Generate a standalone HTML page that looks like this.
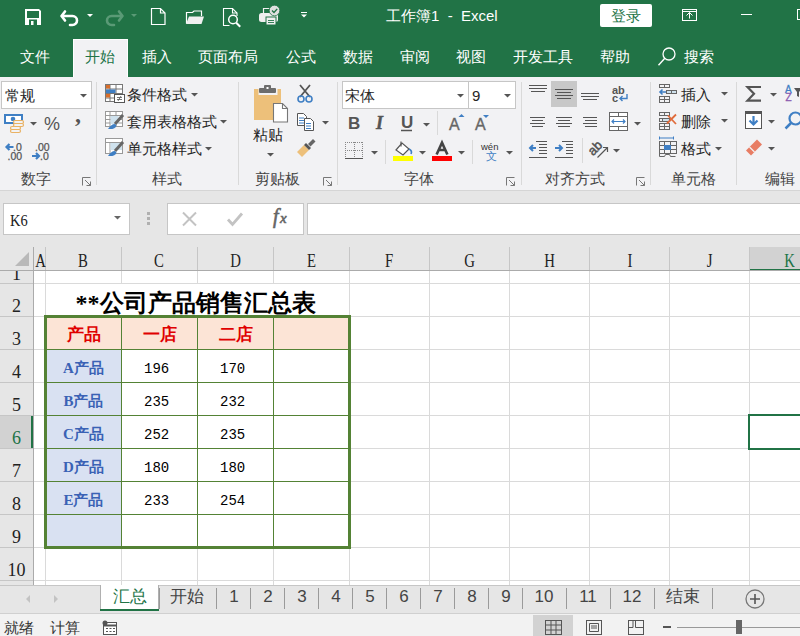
<!DOCTYPE html>
<html><head><meta charset="utf-8">
<style>
*{box-sizing:border-box}
html,body{margin:0;padding:0}
body{width:800px;height:636px;overflow:hidden;position:relative;background:#fff;font-family:"Liberation Sans",sans-serif;color:#262626}
.a{position:absolute}
.t{position:absolute;white-space:nowrap;line-height:1}
#title{left:0;top:0;width:800px;height:77px;background:#217346}
#ribbon{left:0;top:77px;width:800px;height:114px;background:#f2f2f4;border-bottom:1px solid #d5d5d5}
#fbar{left:0;top:191px;width:800px;height:56px;background:#e6e6e6}
.wt{color:#fff}
.sep{position:absolute;width:1px;background:#d9d9d9}
.glabel{position:absolute;top:171px;font-size:15px;color:#444;white-space:nowrap;line-height:1}
.rt{position:absolute;font-size:14px;color:#262626;white-space:nowrap;line-height:1}
.hl{position:absolute;height:1px;background:#dadada}
.vl{position:absolute;width:1px;background:#dadada}
.ch{position:absolute;top:252px;font-family:"Liberation Serif",serif;font-size:18px;color:#222;line-height:1;text-align:center}
.ch span,.rh span{display:inline-block;transform:scaleX(0.82)}
.rh{position:absolute;left:0;width:33px;font-family:"Liberation Serif",serif;font-size:18px;color:#222;line-height:1;text-align:center}
.cell{position:absolute;font-family:"Liberation Mono",monospace;font-size:14px;color:#000;line-height:1;white-space:nowrap}
.gl{position:absolute;background:#548235}
</style></head><body>
<div id="title" class="a"></div>
<div id="ribbon" class="a"></div>
<div id="fbar" class="a"></div>

<!-- title bar icons -->
<svg class="a" style="left:0;top:0" width="800" height="77">
 <!-- save -->
 <path d="M25 9h14l2 2v14h-16z" fill="#fff"/>
 <rect x="27" y="11" width="12" height="7" fill="#217346"/>
 <rect x="29" y="19.5" width="8" height="5.5" fill="#217346"/>
 <rect x="31" y="21" width="2.5" height="4" fill="#fff"/>
 <!-- undo -->
 <path d="M65 11.5 L61.5 16 L65 20.5 M62 16 H72.5 a4.5 4.5 0 0 1 0 9 H70" fill="none" stroke="#fff" stroke-width="2.6" stroke-linecap="round" stroke-linejoin="round"/>
 <path d="M87 14h6l-3 3z" fill="#fff"/>
 <!-- redo faded -->
 <path d="M119 11.5 L122.5 16 L119 20.5 M122 16 H111.5 a4.5 4.5 0 0 0 0 9 H114" fill="none" stroke="#5a9a76" stroke-width="2.6" stroke-linecap="round" stroke-linejoin="round"/>
 <path d="M131 14h6l-3 3z" fill="#5a9a76"/>
 <!-- new -->
 <path d="M151.5 8.5h9l4.5 4.5v11.5h-13.5z M160.5 8.5v4.5h4.5" fill="none" stroke="#fff" stroke-width="1.2"/>
 <!-- open -->
 <path d="M186.5 23.5V12.5h6l1.5-1.5h7.5v5" fill="none" stroke="#fff" stroke-width="1.2"/>
 <path d="M189 16.5h15l-2.5 7.5h-15.5z" fill="#f0f0f0"/>
 <!-- print preview -->
 <path d="M229.5 25.5h-6v-17h9l4.5 4.5v3" fill="none" stroke="#fff" stroke-width="1.1"/>
 <path d="M232.5 8.5v4.5h4.5" fill="none" stroke="#fff" stroke-width="1.1"/>
 <circle cx="233" cy="19.5" r="4.3" fill="none" stroke="#fff" stroke-width="1.5"/>
 <path d="M236.2 22.7l4 4" stroke="#fff" stroke-width="2"/>
 <!-- touch/print -->
 <rect x="259" y="13" width="19" height="9" rx="2.5" fill="#f0f0f0"/>
 <path d="M263.5 13V8.5h6" fill="none" stroke="#f0f0f0" stroke-width="1.2"/>
 <rect x="266" y="17" width="10" height="8" fill="#f0f0f0" stroke="#217346" stroke-width="1"/>
 <path d="M268 20.5h6M268 22.5h6" stroke="#217346" stroke-width="0.9"/>
 <circle cx="274.5" cy="10.5" r="5.3" fill="#e0e0e0" stroke="#217346" stroke-width="0.8"/>
 <path d="M272 10.5l2 2 3.2-3.6" fill="none" stroke="#217346" stroke-width="1.4"/>
 <!-- customize -->
 <path d="M301 12.5h6" stroke="#fff" stroke-width="1"/>
 <path d="M301 14.5h6l-3 3z" fill="#fff"/>
 <!-- ribbon display -->
 <rect x="682.5" y="9.5" width="14" height="11" fill="none" stroke="#fff" stroke-width="1"/>
 <path d="M682.5 11.5h14" stroke="#fff" stroke-width="1"/>
 <path d="M686.5 15.5l3-3 3 3M689.5 12.5v6" fill="none" stroke="#fff" stroke-width="1"/>
 <!-- minimize -->
 <path d="M741 14.5h11" stroke="#fff" stroke-width="1"/>
 <!-- maximize -->
 <rect x="797.5" y="9.5" width="10" height="10" fill="none" stroke="#fff" stroke-width="1"/>
 <!-- search icon -->
 <circle cx="669" cy="54" r="6" fill="none" stroke="#fff" stroke-width="1.3"/>
 <path d="M664.8 58.2l-6.3 7" stroke="#fff" stroke-width="1.4"/>
</svg>
<div class="t wt" style="left:386px;top:8px;font-size:15px">工作簿1&nbsp; -&nbsp; Excel</div>
<div class="a" style="left:600px;top:4px;width:52px;height:23px;background:#fff;border-radius:2px"></div>
<div class="t" style="left:611px;top:8px;font-size:15px;color:#217346">登录</div>
<!-- tabs -->
<div class="a" style="left:73px;top:39px;width:55px;height:38px;background:#f2f2f4;border-top:1px solid #fff;border-left:1px solid #fff;border-right:1px solid #fff"></div>
<div class="t wt" style="left:20px;top:49px;font-size:15px">文件</div>
<div class="t" style="left:85px;top:49px;font-size:15px;color:#217346">开始</div>
<div class="t wt" style="left:142px;top:49px;font-size:15px">插入</div>
<div class="t wt" style="left:198px;top:49px;font-size:15px">页面布局</div>
<div class="t wt" style="left:286px;top:49px;font-size:15px">公式</div>
<div class="t wt" style="left:343px;top:49px;font-size:15px">数据</div>
<div class="t wt" style="left:400px;top:49px;font-size:15px">审阅</div>
<div class="t wt" style="left:456px;top:49px;font-size:15px">视图</div>
<div class="t wt" style="left:513px;top:49px;font-size:15px">开发工具</div>
<div class="t wt" style="left:600px;top:49px;font-size:15px">帮助</div>
<div class="t wt" style="left:684px;top:49px;font-size:15px">搜索</div>



<!-- ===== FORMULA BAR ===== -->
<div class="a" style="left:3px;top:203px;width:127px;height:32px;background:#fff;border:1px solid #c6c6c6"></div>
<div class="t" style="left:10px;top:212px;font-family:'Liberation Serif',serif;font-size:17px;color:#222;transform:scaleX(0.85);transform-origin:0 0">K6</div>
<div class="a" style="left:167px;top:203px;width:137px;height:32px;background:#fff;border:1px solid #c6c6c6"></div>
<div class="a" style="left:307px;top:203px;width:500px;height:32px;background:#fff;border:1px solid #c6c6c6"></div>
<svg class="a" style="left:0;top:191px" width="800" height="56">
 <path d="M114 25h7l-3.5 3.5z" fill="#666"/>
 <rect x="147" y="21" width="3" height="3" fill="#b0b0b0"/>
 <rect x="147" y="26" width="3" height="3" fill="#b0b0b0"/>
 <rect x="147" y="31" width="3" height="3" fill="#b0b0b0"/>
 <path d="M183 21.5l13 13M196 21.5l-13 13" stroke="#c3c3c3" stroke-width="2"/>
 <path d="M228 28.5l4.5 5 9.5-11" fill="none" stroke="#c3c3c3" stroke-width="2.8"/>
 <text x="273" y="32" font-size="20" font-style="italic" fill="#666" stroke="#666" stroke-width="0.6" font-family="Liberation Serif">f</text><text x="280" y="32" font-size="15" font-style="italic" fill="#666" stroke="#666" stroke-width="0.6" font-family="Liberation Serif">x</text>
</svg>


<!-- ===== GRID ===== -->
<div class="a" style="left:0;top:247px;width:800px;height:24px;background:#e6e6e6"></div>
<div class="a" style="left:0;top:271px;width:33px;height:320px;background:#e6e6e6"></div>
<div class="a" style="left:750px;top:247px;width:50px;height:24px;background:#d2d2d2"></div>
<div class="a" style="left:750px;top:269px;width:50px;height:2px;background:#217346"></div>
<div class="a" style="left:0;top:416px;width:33px;height:32px;background:#d2d2d2"></div>
<div class="a" style="left:31px;top:416px;width:2px;height:32px;background:#217346"></div>
<div class="a" style="left:0;top:270px;width:800px;height:1px;background:#ababab"></div>
<div class="a" style="left:33px;top:247px;width:1px;height:340px;background:#ababab"></div>
<div class="a" style="left:45px;top:247px;width:1px;height:23px;background:#c6c6c6"></div>
<div class="vl" style="left:45px;top:271px;height:316px"></div>
<div class="a" style="left:121px;top:247px;width:1px;height:23px;background:#c6c6c6"></div>
<div class="vl" style="left:121px;top:271px;height:13px"></div><div class="vl" style="left:121px;top:316px;height:271px"></div>
<div class="a" style="left:197px;top:247px;width:1px;height:23px;background:#c6c6c6"></div>
<div class="vl" style="left:197px;top:271px;height:13px"></div><div class="vl" style="left:197px;top:316px;height:271px"></div>
<div class="a" style="left:273px;top:247px;width:1px;height:23px;background:#c6c6c6"></div>
<div class="vl" style="left:273px;top:271px;height:13px"></div><div class="vl" style="left:273px;top:316px;height:271px"></div>
<div class="a" style="left:349px;top:247px;width:1px;height:23px;background:#c6c6c6"></div>
<div class="vl" style="left:349px;top:271px;height:316px"></div>
<div class="a" style="left:429px;top:247px;width:1px;height:23px;background:#c6c6c6"></div>
<div class="vl" style="left:429px;top:271px;height:316px"></div>
<div class="a" style="left:509px;top:247px;width:1px;height:23px;background:#c6c6c6"></div>
<div class="vl" style="left:509px;top:271px;height:316px"></div>
<div class="a" style="left:589px;top:247px;width:1px;height:23px;background:#c6c6c6"></div>
<div class="vl" style="left:589px;top:271px;height:316px"></div>
<div class="a" style="left:669px;top:247px;width:1px;height:23px;background:#c6c6c6"></div>
<div class="vl" style="left:669px;top:271px;height:316px"></div>
<div class="a" style="left:749px;top:247px;width:1px;height:23px;background:#c6c6c6"></div>
<div class="vl" style="left:749px;top:271px;height:316px"></div>
<div class="a" style="left:0;top:283px;width:33px;height:1px;background:#c6c6c6"></div>
<div class="hl" style="left:34px;top:283px;width:766px"></div>
<div class="a" style="left:0;top:316px;width:33px;height:1px;background:#c6c6c6"></div>
<div class="hl" style="left:34px;top:316px;width:766px"></div>
<div class="a" style="left:0;top:349px;width:33px;height:1px;background:#c6c6c6"></div>
<div class="hl" style="left:34px;top:349px;width:766px"></div>
<div class="a" style="left:0;top:382px;width:33px;height:1px;background:#c6c6c6"></div>
<div class="hl" style="left:34px;top:382px;width:766px"></div>
<div class="a" style="left:0;top:415px;width:33px;height:1px;background:#c6c6c6"></div>
<div class="hl" style="left:34px;top:415px;width:766px"></div>
<div class="a" style="left:0;top:448px;width:33px;height:1px;background:#c6c6c6"></div>
<div class="hl" style="left:34px;top:448px;width:766px"></div>
<div class="a" style="left:0;top:481px;width:33px;height:1px;background:#c6c6c6"></div>
<div class="hl" style="left:34px;top:481px;width:766px"></div>
<div class="a" style="left:0;top:514px;width:33px;height:1px;background:#c6c6c6"></div>
<div class="hl" style="left:34px;top:514px;width:766px"></div>
<div class="a" style="left:0;top:547px;width:33px;height:1px;background:#c6c6c6"></div>
<div class="hl" style="left:34px;top:547px;width:766px"></div>
<div class="a" style="left:0;top:580px;width:33px;height:1px;background:#c6c6c6"></div>
<div class="hl" style="left:34px;top:580px;width:766px"></div>
<svg class="a" style="left:0;top:247px" width="33" height="23"><path d="M29 5v14H15z" fill="#b9b9b9"/></svg>
<div class="ch" style="left:34px;width:11px;color:#222"><span>A</span></div>
<div class="ch" style="left:46px;width:75px;color:#222"><span>B</span></div>
<div class="ch" style="left:122px;width:75px;color:#222"><span>C</span></div>
<div class="ch" style="left:198px;width:75px;color:#222"><span>D</span></div>
<div class="ch" style="left:274px;width:75px;color:#222"><span>E</span></div>
<div class="ch" style="left:350px;width:79px;color:#222"><span>F</span></div>
<div class="ch" style="left:430px;width:79px;color:#222"><span>G</span></div>
<div class="ch" style="left:510px;width:79px;color:#222"><span>H</span></div>
<div class="ch" style="left:590px;width:79px;color:#222"><span>I</span></div>
<div class="ch" style="left:670px;width:79px;color:#222"><span>J</span></div>
<div class="ch" style="left:750px;width:79px;color:#217346"><span>K</span></div>
<div class="a" style="left:0;top:271px;width:33px;height:12px;overflow:hidden"><div class="rh" style="top:-6px">1</div></div>
<div class="rh" style="top:297px;color:#222">2</div>
<div class="rh" style="top:330px;color:#222">3</div>
<div class="rh" style="top:363px;color:#222">4</div>
<div class="rh" style="top:396px;color:#222">5</div>
<div class="rh" style="top:429px;color:#217346">6</div>
<div class="rh" style="top:462px;color:#222">7</div>
<div class="rh" style="top:495px;color:#222">8</div>
<div class="rh" style="top:528px;color:#222">9</div>
<div class="rh" style="top:561px;color:#222">10</div>

<!-- ===== TABLE ===== -->
<div class="a" style="left:46px;top:317px;width:303px;height:32px;background:#fce4d6"></div>
<div class="a" style="left:46px;top:350px;width:75px;height:197px;background:#d9e1f2"></div>
<div class="t" style="left:44px;top:291px;width:303px;text-align:center;font-family:'Liberation Serif',serif;font-size:24px;font-weight:bold;color:#000">**公司产品销售汇总表</div>
<div class="t" style="left:46px;top:326px;width:75px;text-align:center;font-family:'Liberation Serif',serif;font-size:17px;font-weight:bold;color:#e00000">产品</div>
<div class="t" style="left:122px;top:326px;width:75px;text-align:center;font-family:'Liberation Serif',serif;font-size:17px;font-weight:bold;color:#e00000">一店</div>
<div class="t" style="left:198px;top:326px;width:75px;text-align:center;font-family:'Liberation Serif',serif;font-size:17px;font-weight:bold;color:#e00000">二店</div>
<div class="t" style="left:46px;top:361px;width:75px;text-align:center;font-family:'Liberation Serif',serif;font-size:15px;font-weight:bold;color:#3a62b5">A产品</div>
<div class="cell" style="left:144px;top:362px">196</div>
<div class="cell" style="left:220px;top:362px">170</div>
<div class="t" style="left:46px;top:394px;width:75px;text-align:center;font-family:'Liberation Serif',serif;font-size:15px;font-weight:bold;color:#3a62b5">B产品</div>
<div class="cell" style="left:144px;top:395px">235</div>
<div class="cell" style="left:220px;top:395px">232</div>
<div class="t" style="left:46px;top:427px;width:75px;text-align:center;font-family:'Liberation Serif',serif;font-size:15px;font-weight:bold;color:#3a62b5">C产品</div>
<div class="cell" style="left:144px;top:428px">252</div>
<div class="cell" style="left:220px;top:428px">235</div>
<div class="t" style="left:46px;top:460px;width:75px;text-align:center;font-family:'Liberation Serif',serif;font-size:15px;font-weight:bold;color:#3a62b5">D产品</div>
<div class="cell" style="left:144px;top:461px">180</div>
<div class="cell" style="left:220px;top:461px">180</div>
<div class="t" style="left:46px;top:493px;width:75px;text-align:center;font-family:'Liberation Serif',serif;font-size:15px;font-weight:bold;color:#3a62b5">E产品</div>
<div class="cell" style="left:144px;top:494px">233</div>
<div class="cell" style="left:220px;top:494px">254</div>
<div class="gl" style="left:121px;top:316px;width:1px;height:231px"></div>
<div class="gl" style="left:197px;top:316px;width:1px;height:231px"></div>
<div class="gl" style="left:273px;top:316px;width:1px;height:231px"></div>
<div class="gl" style="left:45px;top:349px;width:304px;height:1px"></div>
<div class="gl" style="left:45px;top:382px;width:304px;height:1px"></div>
<div class="gl" style="left:45px;top:415px;width:304px;height:1px"></div>
<div class="gl" style="left:45px;top:448px;width:304px;height:1px"></div>
<div class="gl" style="left:45px;top:481px;width:304px;height:1px"></div>
<div class="gl" style="left:45px;top:514px;width:304px;height:1px"></div>
<div class="gl" style="left:44px;top:315px;width:307px;height:3px"></div>
<div class="gl" style="left:44px;top:546px;width:307px;height:3px"></div>
<div class="gl" style="left:44px;top:315px;width:3px;height:234px"></div>
<div class="gl" style="left:348px;top:315px;width:3px;height:234px"></div>
<div class="a" style="left:748px;top:414px;width:60px;height:36px;border:2px solid #217346"></div>

<!-- ===== SHEET TABS ===== -->
<div class="a" style="left:0;top:585px;width:800px;height:28px;background:#e6e6e6;border-top:1px solid #c6c6c6"></div>
<div class="a" style="left:100px;top:585px;width:59px;height:25px;background:#fff;border-left:1px solid #b0b0b0;border-right:1px solid #b0b0b0"></div>
<div class="a" style="left:100px;top:609px;width:59px;height:2px;background:#217346"></div>
<div class="t" style="left:113px;top:588px;font-size:17px;color:#217346">汇总</div>
<div class="t" style="left:166px;top:588px;width:42px;text-align:center;font-size:17px;color:#444">开始</div>
<div class="t" style="left:222px;top:588px;width:24px;text-align:center;font-size:17px;color:#444">1</div>
<div class="t" style="left:256px;top:588px;width:24px;text-align:center;font-size:17px;color:#444">2</div>
<div class="t" style="left:290px;top:588px;width:24px;text-align:center;font-size:17px;color:#444">3</div>
<div class="t" style="left:324px;top:588px;width:24px;text-align:center;font-size:17px;color:#444">4</div>
<div class="t" style="left:358px;top:588px;width:24px;text-align:center;font-size:17px;color:#444">5</div>
<div class="t" style="left:392px;top:588px;width:24px;text-align:center;font-size:17px;color:#444">6</div>
<div class="t" style="left:426px;top:588px;width:24px;text-align:center;font-size:17px;color:#444">7</div>
<div class="t" style="left:460px;top:588px;width:24px;text-align:center;font-size:17px;color:#444">8</div>
<div class="t" style="left:494px;top:588px;width:24px;text-align:center;font-size:17px;color:#444">9</div>
<div class="t" style="left:528px;top:588px;width:32px;text-align:center;font-size:17px;color:#444">10</div>
<div class="t" style="left:572px;top:588px;width:32px;text-align:center;font-size:17px;color:#444">11</div>
<div class="t" style="left:616px;top:588px;width:32px;text-align:center;font-size:17px;color:#444">12</div>
<div class="t" style="left:661px;top:588px;width:44px;text-align:center;font-size:17px;color:#444">结束</div>
<div class="a" style="left:159px;top:588px;width:1px;height:21px;background:#9a9a9a"></div>
<div class="a" style="left:216px;top:588px;width:1px;height:21px;background:#9a9a9a"></div>
<div class="a" style="left:250px;top:588px;width:1px;height:21px;background:#9a9a9a"></div>
<div class="a" style="left:284px;top:588px;width:1px;height:21px;background:#9a9a9a"></div>
<div class="a" style="left:318px;top:588px;width:1px;height:21px;background:#9a9a9a"></div>
<div class="a" style="left:352px;top:588px;width:1px;height:21px;background:#9a9a9a"></div>
<div class="a" style="left:386px;top:588px;width:1px;height:21px;background:#9a9a9a"></div>
<div class="a" style="left:420px;top:588px;width:1px;height:21px;background:#9a9a9a"></div>
<div class="a" style="left:454px;top:588px;width:1px;height:21px;background:#9a9a9a"></div>
<div class="a" style="left:488px;top:588px;width:1px;height:21px;background:#9a9a9a"></div>
<div class="a" style="left:522px;top:588px;width:1px;height:21px;background:#9a9a9a"></div>
<div class="a" style="left:566px;top:588px;width:1px;height:21px;background:#9a9a9a"></div>
<div class="a" style="left:610px;top:588px;width:1px;height:21px;background:#9a9a9a"></div>
<div class="a" style="left:654px;top:588px;width:1px;height:21px;background:#9a9a9a"></div>
<div class="a" style="left:712px;top:588px;width:1px;height:21px;background:#9a9a9a"></div>
<svg class="a" style="left:0;top:585px" width="800" height="28"><path d="M30 10v8l-4-4z" fill="#c3c3c3"/><path d="M54 10v8l4-4z" fill="#c3c3c3"/><circle cx="755" cy="14" r="9" fill="none" stroke="#777" stroke-width="1.3"/><path d="M750 14h10M755 9v10" stroke="#555" stroke-width="1.6"/></svg>
<div class="a" style="left:0;top:613px;width:800px;height:23px;background:#f2f2f2;border-top:1px solid #d0d0d0"></div>
<div class="t" style="left:4px;top:620px;font-size:15px;color:#333">就绪</div>
<div class="t" style="left:50px;top:620px;font-size:15px;color:#333">计算</div>
<svg class="a" style="left:0;top:615px" width="800" height="21">
 <rect x="103.5" y="7.5" width="13" height="12" fill="#fff" stroke="#555"/>
 <path d="M103.5 10.5h13" stroke="#555" stroke-width="2"/>
 <path d="M106 13.5h2M109.5 13.5h2M113 13.5h2M106 16.5h2M109.5 16.5h2M113 16.5h2" stroke="#555"/>
 <circle cx="105" cy="8" r="2.5" fill="#555"/>
 <rect x="533" y="-2" width="40" height="23" fill="#d2d2d2"/>
 <g stroke="#555" fill="none" stroke-width="1">
  <rect x="545.5" y="5.5" width="16" height="14"/>
  <path d="M545.5 10h16M545.5 15h16M551 5.5v14M556 5.5v14"/>
  <rect x="586.5" y="5.5" width="15" height="14"/>
  <path d="M589.5 8.5h9v8h-9zM591 11h6M591 13h6"/>
  <rect x="628.5" y="5.5" width="15" height="14"/>
  <path d="M635.5 5.5v7h8M633 5.5v7h-4.5"/>
 </g>
 <path d="M663 12h8" stroke="#555" stroke-width="2"/>
 <path d="M677 12.5h123" stroke="#999" stroke-width="1"/>
 <rect x="736" y="5" width="6" height="14" fill="#666"/>
</svg>
<!-- ===== RIBBON ===== -->
<div class="sep" style="left:96px;top:82px;height:103px"></div>
<div class="sep" style="left:238px;top:82px;height:103px"></div>
<div class="sep" style="left:337px;top:82px;height:103px"></div>
<div class="sep" style="left:521px;top:82px;height:103px"></div>
<div class="sep" style="left:650px;top:82px;height:103px"></div>
<div class="sep" style="left:736px;top:82px;height:103px"></div>
<div class="glabel" style="left:21px">数字</div>
<div class="glabel" style="left:152px">样式</div>
<div class="glabel" style="left:255px">剪贴板</div>
<div class="glabel" style="left:404px">字体</div>
<div class="glabel" style="left:545px">对齐方式</div>
<div class="glabel" style="left:671px">单元格</div>
<div class="glabel" style="left:765px">编辑</div>
<!-- number -->
<div class="a" style="left:1px;top:81px;width:91px;height:28px;background:#fff;border:1px solid #c6c6c6"></div>
<div class="rt" style="left:5px;top:88px;font-size:15px">常规</div>
<div class="t" style="left:87px;top:112px;font-size:20px;color:#555"></div>
<div class="rt" style="left:44px;top:115px;font-size:18px;color:#555">%</div>
<div class="rt" style="left:75px;top:102px;font-family:'Liberation Serif',serif;font-size:24px;font-weight:bold;color:#555">,</div>
<!-- styles -->
<div class="rt" style="left:127px;top:87px;font-size:15px">条件格式</div>
<div class="rt" style="left:127px;top:114px;font-size:15px">套用表格格式</div>
<div class="rt" style="left:127px;top:141px;font-size:15px">单元格样式</div>
<!-- clipboard -->
<div class="rt" style="left:253px;top:127px;font-size:15px">粘贴</div>
<!-- font -->
<div class="a" style="left:342px;top:81px;width:127px;height:28px;background:#fff;border:1px solid #c6c6c6"></div>
<div class="a" style="left:468px;top:81px;width:48px;height:28px;background:#fff;border:1px solid #c6c6c6"></div>
<div class="rt" style="left:345px;top:88px;font-size:15px">宋体</div>
<div class="rt" style="left:472px;top:88px;font-size:15px">9</div>
<!-- cells -->
<div class="rt" style="left:681px;top:87px;font-size:15px">插入</div>
<div class="rt" style="left:681px;top:114px;font-size:15px">删除</div>
<div class="rt" style="left:681px;top:141px;font-size:15px">格式</div>
<svg class="a" style="left:0;top:0" width="800" height="191">
 <defs>
  <path id="dd" d="M0 0h7l-3.5 3.5z" fill="#555"/>
  <path id="launch" d="M0.5 8.5v-8h8M3 3l5.5 5.5M4.5 8.5h4v-4" fill="none" stroke="#777" stroke-width="1"/>
 </defs>
 <!-- launchers -->
 <use href="#launch" x="82" y="177"/>
 <use href="#launch" x="323" y="177"/>
 <use href="#launch" x="506" y="177"/>
 <use href="#launch" x="636" y="177"/>
 <!-- number dropdown -->
 <use href="#dd" x="80" y="94"/>
 <!-- currency -->
 <rect x="4" y="114" width="19" height="10" fill="#3f7fc4"/>
 <rect x="6" y="116" width="15" height="6" fill="#fff"/>
 <rect x="8" y="117.5" width="11" height="3" fill="#3f7fc4" opacity="0"/>
 <circle cx="13" cy="119" r="2.3" fill="#3f7fc4"/>
 <g fill="#f2f2f4" stroke="#e9b264" stroke-width="1.2">
  <rect x="10.5" y="129.5" width="10" height="3" rx="1.5"/>
  <rect x="10.5" y="126.5" width="10" height="3" rx="1.5"/>
  <rect x="13.5" y="123.5" width="10" height="3" rx="1.5"/>
  <rect x="13.5" y="120.5" width="10" height="3" rx="1.5"/>
 </g>
 <use href="#dd" x="30" y="122"/>
 <!-- decimals -->
 <g font-size="10.5" fill="#555" stroke="#555" stroke-width="0.25" font-family="Liberation Sans">
 <text x="13" y="150.5">.0</text>
 <text x="7.5" y="159.5">.00</text>
 <text x="35" y="150.5">.00</text>
 <text x="40" y="159.5">.0</text>
 </g>
 <path d="M6.5 147h7M9.5 144l-3 3 3 3" fill="none" stroke="#3f7fc4" stroke-width="2.2"/>
 <path d="M32 156h7M36 153l3 3-3 3" fill="none" stroke="#3f7fc4" stroke-width="2.2"/>
 <!-- styles icons -->
 <g stroke="#777" stroke-width="1" fill="#fff">
  <rect x="105.5" y="84.5" width="17" height="17"/>
  <path d="M105.5 89h17M105.5 93.5h17M105.5 98h17M110 84.5v17M116 84.5v17" fill="none"/>
 </g>
 <rect x="106" y="85" width="4" height="3.5" fill="#d86e2b"/>
 <rect x="106" y="89.5" width="9.5" height="3.5" fill="#3f7fc4"/>
 <rect x="106" y="94" width="4" height="3.5" fill="#d86e2b"/>
 <rect x="114.5" y="94.5" width="10" height="8" fill="#fff" stroke="#555"/>
 <path d="M117 97.5h5M117 99.5h5M121 96l-3 5" stroke="#555" stroke-width="0.8" fill="none"/>
 <g stroke="#999" stroke-width="1" fill="#fff">
  <rect x="105.5" y="111.5" width="17" height="15"/>
  <path d="M105.5 115.5h17M105.5 119.5h17M105.5 123h17M110 111.5v15M116 111.5v15" fill="none"/>
 </g>
 <rect x="110.5" y="116" width="8" height="8" fill="#cfe2ee"/>
 <path d="M123 115l-8 9" stroke="#666" stroke-width="3"/>
 <path d="M108 129c2-3 4-5 7-5l1.5 1.5c-1 3-4 4-8.5 3.5z" fill="#3f7fc4"/>
 <g stroke="#999" stroke-width="1" fill="#fff">
  <rect x="105.5" y="138.5" width="17" height="15"/>
  <path d="M105.5 142.5h17M110 142.5v11" fill="none"/>
 </g>
 <rect x="110.5" y="143" width="11.5" height="7" fill="#cfe2ee"/>
 <path d="M123 142l-8 9" stroke="#666" stroke-width="3"/>
 <path d="M108 156c2-3 4-5 7-5l1.5 1.5c-1 3-4 4-8.5 3.5z" fill="#3f7fc4"/>
 <use href="#dd" x="191" y="93"/>
 <use href="#dd" x="220" y="120"/>
 <use href="#dd" x="205" y="147"/>
 <!-- paste -->
 <rect x="254" y="89" width="27" height="31" fill="#edc07a"/>
 <rect x="258.5" y="87" width="19" height="8" fill="#f2f2f4"/>
 <rect x="259" y="88" width="17" height="5" rx="1" fill="#6d6d6d"/>
 <rect x="264" y="85" width="7" height="5" rx="1" fill="#6d6d6d"/>
 <rect x="266.5" y="87" width="2" height="2" fill="#fff"/>
 <path d="M273.5 103.5h9l5 5v13.5h-14z" fill="#fff" stroke="#777" stroke-width="1.1"/>
 <path d="M282.5 103.5v5h5" fill="none" stroke="#777" stroke-width="1.1"/>
 <use href="#dd" x="267" y="153"/>
 <!-- scissors -->
 <path d="M300 85l10 12M310 85l-10 12" stroke="#555" stroke-width="1.8"/>
 <circle cx="301" cy="99" r="3" fill="none" stroke="#3f7fc4" stroke-width="1.6"/>
 <circle cx="309" cy="99" r="3" fill="none" stroke="#3f7fc4" stroke-width="1.6"/>
 <!-- copy -->
 <path d="M297.5 113.5h6l3 3v9h-9z" fill="#fff" stroke="#555"/>
 <path d="M304.5 118.5h6l3 3v9h-9z" fill="#fff" stroke="#555"/>
 <path d="M299 118h5M299 120.5h5M299 123h5M306 123.5h5M306 126h5M306 128.5h5" stroke="#3f7fc4" stroke-width="1"/>
 <use href="#dd" x="322" y="121"/>
 <!-- painter -->
 <path d="M297 152l7-7 5 5-7 7z" fill="#edc07a"/>
 <path d="M304 145l2-2 5 5-2 2z" fill="#555"/>
 <path d="M308 144l5-5 2.5 2.5-5 5z" fill="#666"/>
 <!-- font dropdowns -->
 <use href="#dd" x="457" y="94"/>
 <use href="#dd" x="504" y="94"/>
 <!-- B I U -->
 <text x="348" y="129" font-size="17" font-weight="bold" fill="#555" font-family="Liberation Sans">B</text>
 <text x="376" y="129" font-size="18" font-weight="bold" font-style="italic" fill="#555" stroke="#555" stroke-width="0.4" font-family="Liberation Serif">I</text>
 <text x="401" y="128" font-size="17" font-weight="bold" fill="#555" font-family="Liberation Sans">U</text>
 <path d="M401 130.5h11" stroke="#555" stroke-width="1.5"/>
 <use href="#dd" x="423" y="123"/>
 <rect x="437" y="111" width="1" height="24" fill="#d9d9d9"/>
 <text x="449" y="130" font-size="16" fill="#666" stroke="#666" stroke-width="0.35" font-family="Liberation Sans">A</text>
 <path d="M458.5 117h6l-3-3z" fill="#3f7fc4"/>
 <text x="475" y="130" font-size="16" fill="#666" stroke="#666" stroke-width="0.35" font-family="Liberation Sans">A</text>
 <path d="M483 115h6l-3 3z" fill="#3f7fc4"/>
 <!-- borders -->
 <g fill="#777">
  <rect x="345" y="142" width="18" height="1" fill="url(#dots)"/>
 </g>
 <path d="M345 142.5h18M345 150.5h18M345.5 142v16M354.5 142v16M362.5 142v16" fill="none" stroke="#888" stroke-width="1" stroke-dasharray="1 1"/>
 <path d="M345 158.5h18" stroke="#555" stroke-width="1"/>
 <use href="#dd" x="371" y="151"/>
 <rect x="385" y="140" width="1" height="24" fill="#d9d9d9"/>
 <!-- fill -->
 <path d="M396 150l6-7 7 6-6 6z" fill="#fff" stroke="#555" stroke-width="1.2"/>
 <path d="M401 141.5v5" stroke="#555" stroke-width="1.2"/>
 <path d="M409 149c2 1 3 3 2 5" fill="none" stroke="#3f7fc4" stroke-width="1.6"/>
 <rect x="393" y="156" width="20" height="5" fill="#ffff00"/>
 <use href="#dd" x="419" y="151"/>
 <!-- font color -->
 <path d="M436.6 154.5 L442 142.6 L447.4 154.5 M438.6 150 h6.8" fill="none" stroke="#444" stroke-width="2.6" stroke-linejoin="miter"/>
 <rect x="432" y="156" width="20" height="5" fill="#ff0000"/>
 <use href="#dd" x="458" y="151"/>
 <rect x="472" y="140" width="1" height="24" fill="#d9d9d9"/>
 <!-- wen -->
 <text x="481" y="150" font-size="9.5" fill="#333" font-family="Liberation Sans">wén</text>
 <text x="486" y="160" font-size="11" fill="#3f7fc4" font-family="Liberation Sans">文</text>
 <use href="#dd" x="506" y="151"/>
 <!-- align -->
 <rect x="551" y="81" width="26" height="26" fill="#c8c8c8"/>
 <g stroke="#555" stroke-width="1">
  <path d="M529 85.5h18M529 88.5h18M531 91.5h14"/>
  <path d="M555 89.5h18M557 92.5h14M555 95.5h18M557 98.5h14"/>
  <path d="M581 93.5h18M581 96.5h18M583 99.5h14"/>
  <path d="M530 117.5h15M532 120.5h11M530 123.5h15M532 126.5h11"/>
  <path d="M556 117.5h16M558 120.5h12M556 123.5h16M558 126.5h12"/>
  <path d="M583 117.5h14M585 120.5h12M583 123.5h14M585 126.5h12"/>
  <path d="M536 141.5h11M539 144.5h8M539 147.5h8M539 150.5h8M539 153.5h8M529 157.5h18"/>
  <path d="M562 141.5h11M566 144.5h7M566 147.5h7M566 150.5h7M566 153.5h7M555 157.5h18"/>
 </g>
 <path d="M536 148h-6M533 145l-3 3 3 3" fill="none" stroke="#3f7fc4" stroke-width="2"/>
 <path d="M555 148h7M559 145l3 3-3 3" fill="none" stroke="#3f7fc4" stroke-width="2"/>
 <text x="612" y="94" font-size="11" font-weight="bold" fill="#555" font-family="Liberation Sans">ab</text>
 <text x="612" y="102" font-size="11" font-weight="bold" fill="#555" font-family="Liberation Sans">c</text>
 <path d="M627 94v4.5h-7M622.5 96l-2.5 2.5 2.5 2.5" fill="none" stroke="#3f7fc4" stroke-width="1.4"/>
 <!-- merge -->
 <rect x="609.5" y="112.5" width="18" height="18" fill="#fff" stroke="#666"/>
 <path d="M609.5 116.5h18M609.5 126.5h18M618.5 112.5v4M618.5 126.5v4" stroke="#666" stroke-width="1"/>
 <path d="M612 121.5h13M614 119.5l-2 2 2 2M623 119.5l2 2-2 2" fill="none" stroke="#3f7fc4" stroke-width="1.2"/>
 <use href="#dd" x="634" y="122"/>
 <rect x="582" y="138" width="1" height="25" fill="#d9d9d9"/>
 <!-- orientation -->
 <text x="587" y="152" font-size="13" fill="#555" stroke="#555" stroke-width="0.5" font-family="Liberation Sans" transform="rotate(-45 595 147)">ab</text>
 <path d="M597.5 157.5l10-10M603 147.5h4.5v4.5" fill="none" stroke="#555" stroke-width="1.2"/>
 <use href="#dd" x="613" y="149"/>
 <!-- cells icons -->
 <g stroke="#666" stroke-width="1" fill="none">
  <rect x="659.5" y="84.5" width="10" height="3"/><path d="M664.5 84.5v3"/>
  <rect x="659.5" y="96.5" width="10" height="6"/><path d="M659.5 99.5h10M664.5 96.5v6"/>
  <rect x="666.5" y="90.5" width="10" height="3" fill="#cfe2ee"/><path d="M671.5 90.5v3"/>
 </g>
 <path d="M666 92h-6M662.5 89.5l-2.5 2.5 2.5 2.5" fill="none" stroke="#3f7fc4" stroke-width="1.6"/>
 <use href="#dd" x="721" y="92"/>
 <g stroke="#666" stroke-width="1" fill="none">
  <rect x="659.5" y="112.5" width="10" height="3"/><path d="M664.5 112.5v3"/>
  <rect x="659.5" y="123.5" width="10" height="6"/><path d="M659.5 126.5h10M664.5 123.5v6"/>
  <rect x="659.5" y="118.5" width="3" height="3"/>
  <rect x="662.5" y="118.5" width="7" height="3" fill="#cfe2ee"/>
 </g>
 <path d="M668 115.5l8 8.5M676 114.5l-9 9" stroke="#e06c3c" stroke-width="1.8"/>
 <use href="#dd" x="721" y="119"/>
 <g stroke="#666" stroke-width="1" fill="none">
  <rect x="659.5" y="141.5" width="17" height="12"/>
  <path d="M659.5 145.5h17M659.5 149.5h17M664.5 141.5v12M670.5 141.5v12"/>
  <path d="M659.5 153.5v3h5l1-2h4l1 2h5"/>
 </g>
 <rect x="664" y="145" width="7" height="5" fill="#3f7fc4"/>
 <path d="M660 138h13M659.5 136.5v3M673.5 136.5v3" stroke="#3f7fc4" stroke-width="1"/>
 <use href="#dd" x="715" y="147"/>
 <!-- editing -->
 <path d="M761 87h-13.5l6.5 6.8-6.5 6.8h13.5" fill="none" stroke="#555" stroke-width="2.2" stroke-linejoin="miter"/>
 <use href="#dd" x="770" y="93"/>
 <text x="785" y="92.5" font-size="10" fill="#3f7fc4" stroke="#3f7fc4" stroke-width="0.3" font-family="Liberation Sans">A</text>
 <text x="785.5" y="100.5" font-size="10" fill="#8b5ab0" stroke="#8b5ab0" stroke-width="0.3" font-family="Liberation Sans">Z</text>
 <path d="M794 88h8l-3 4v5l-2-1v-4z" fill="#555"/>
 <rect x="745.5" y="111.5" width="16" height="17" fill="#fff" stroke="#555"/>
 <path d="M745.5 113h16" stroke="#555" stroke-width="2"/>
 <path d="M753.5 116v8M749.5 120.5l4 4 4-4" fill="none" stroke="#3f7fc4" stroke-width="2.2"/>
 <use href="#dd" x="768" y="120"/>
 <circle cx="795.5" cy="118.5" r="6" fill="none" stroke="#3f7fc4" stroke-width="2.2"/>
 <path d="M791 123l-5.5 5.5" stroke="#3f7fc4" stroke-width="2.5"/>
 <path d="M746 150.5l11-11 5 5-11 11z" fill="#e87d64"/>
 <path d="M749.5 147l5 5" stroke="#f2f2f4" stroke-width="1.2"/>
 <use href="#dd" x="768" y="147"/>
</svg>

</body></html>
